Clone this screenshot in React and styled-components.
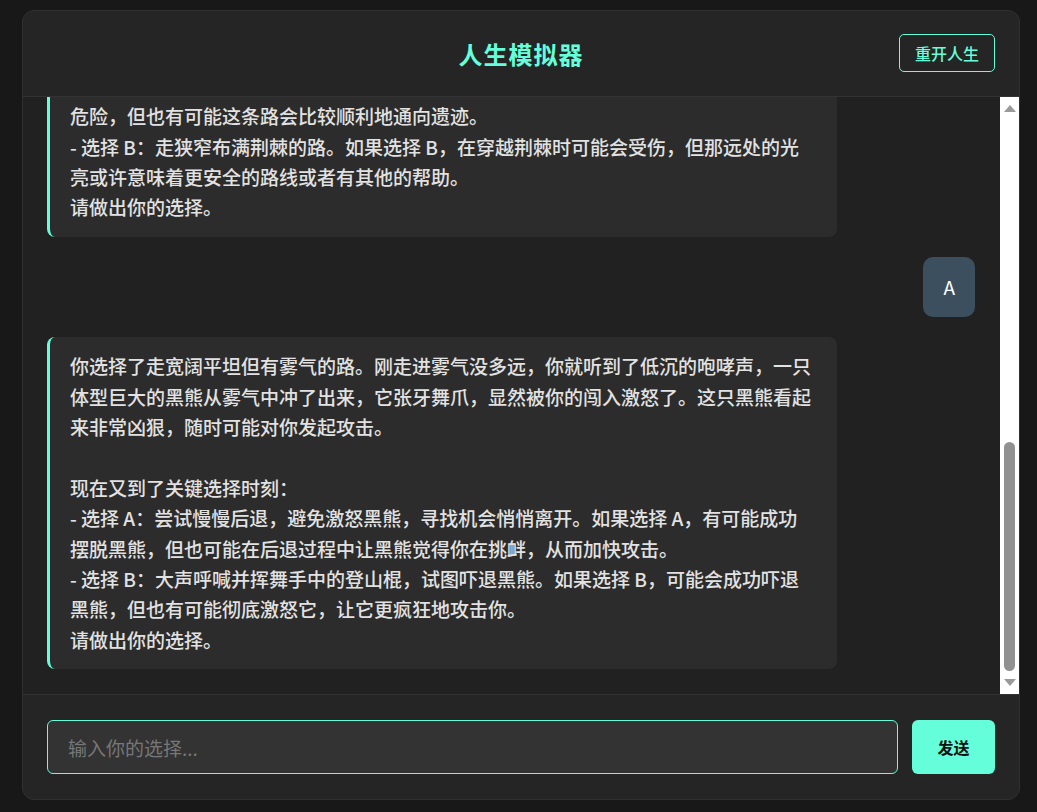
import React, { useLayoutEffect, useRef, useState } from 'react';
import styled, { createGlobalStyle } from 'styled-components';

const GlobalStyle = createGlobalStyle`
  html, body {
    margin: 0;
    padding: 0;
    background: #181818;
  }
  body {
    font-family: "Noto Sans CJK SC", "Noto Sans", sans-serif;
    color: #e0e0e0;
  }
  * {
    box-sizing: border-box;
  }
`;

const Page = styled.div`
  padding: 10px 17px 12px 22px;
`;

const Card = styled.div`
  width: 998px;
  height: 790px;
  display: flex;
  flex-direction: column;
  background: #252525;
  border-radius: 12px;
  border: 1px solid #303030;
  overflow: hidden;
`;

const Header = styled.header`
  display: grid;
  grid-template-columns: 1fr auto 1fr;
  align-items: center;
  padding: 23px 24px 24px;
  border-bottom: 1px solid #333;
`;

const Title = styled.h1`
  grid-column: 2;
  margin: 0;
  font-size: 24px;
  font-weight: 700;
  color: #64ffda;
  letter-spacing: 1px;
`;

const ResetButton = styled.button`
  grid-column: 3;
  justify-self: end;
  height: 38px;
  padding: 0 15px;
  background: transparent;
  border: 1px solid #64ffda;
  border-radius: 5px;
  color: #64ffda;
  font-family: inherit;
  font-size: 16px;
  font-weight: 500;
  cursor: pointer;
`;

const MessagesPane = styled.div`
  flex: 1;
  min-height: 0;
  display: flex;
  background: #212121;
`;

const MessageList = styled.div`
  flex: 1;
  min-width: 0;
  overflow-y: auto;
  scrollbar-width: none;
  padding: 25px 25px 25px 24px;
  display: flex;
  flex-direction: column;
  gap: 20px;

  &::-webkit-scrollbar {
    display: none;
  }
`;

/* drawn scrollbar, the headless browser hides the native one */
const ScrollBar = styled.div`
  width: 19px;
  flex-shrink: 0;
  display: flex;
  flex-direction: column;
  background: #fff;
`;

const ArrowButton = styled.div`
  height: 19px;
  flex-shrink: 0;
  display: flex;
  justify-content: center;
  align-items: ${({ $down }) => ($down ? 'flex-start' : 'flex-end')};
  padding: ${({ $down }) => ($down ? '4px 0 0' : '0 0 4px')};
`;

const Triangle = styled.span`
  width: 0;
  height: 0;
  border-left: 6.5px solid transparent;
  border-right: 6.5px solid transparent;
  ${({ $down }) =>
    $down ? 'border-top: 7px solid #9a9a9a;' : 'border-bottom: 7px solid #9a9a9a;'}
`;

const Track = styled.div`
  flex: 1;
  display: flex;
  flex-direction: column;
  justify-content: flex-end;
  align-items: center;
  padding: 4px 0;
`;

const Thumb = styled.div`
  width: 11px;
  border-radius: 6px;
  background: #919191;
`;

const Bubble = styled.div`
  flex-shrink: 0;
  max-width: ${({ $user }) => ($user ? '85%' : '790px')};
  align-self: ${({ $user }) => ($user ? 'flex-end' : 'flex-start')};
  padding: ${({ $user }) => ($user ? '15px 20px' : '14px 25px 14px 20px')};
  background: ${({ $user }) => ($user ? '#3c4f5f' : '#2c2c2c')};
  border-left: ${({ $user }) => ($user ? 'none' : '3px solid #64ffda')};
  border-radius: ${({ $user }) => ($user ? '10px' : '8px')};
  color: ${({ $user }) => ($user ? '#fff' : '#e2e2e2')};
  font-size: 19px;
  font-weight: ${({ $user }) => ($user ? 400 : 500)};
  line-height: 1.6;
  white-space: pre-wrap;
`;

const InputBar = styled.div`
  display: flex;
  gap: 14px;
  padding: 25px 24px 25px 24px;
  border-top: 1px solid #333;
`;

const ChoiceInput = styled.input`
  flex: 1;
  height: 54px;
  padding: 0 20px;
  background: #333;
  border: 1px solid #64ffda;
  border-radius: 6px;
  color: #e0e0e0;
  caret-color: #fff;
  font-family: inherit;
  font-size: 19px;
  outline: none;

  &::placeholder {
    color: #777;
  }
`;

const SendButton = styled.button`
  width: 83px;
  height: 54px;
  background: #64ffda;
  border: none;
  border-radius: 6px;
  color: #111;
  font-family: inherit;
  font-size: 16px;
  font-weight: 700;
  cursor: pointer;
`;

const initialMessages = [
  {
    role: 'bot',
    text: '欢迎来到人生模拟器！在这里，你将扮演一名热爱冒险的年轻探险家，经历一段充满未知的旅程。你的每一个选择都会影响故事的走向。准备好了吗？回复任意内容开始你的冒险。',
  },
  { role: 'user', text: '开始' },
  {
    role: 'bot',
    text: '你是一名热爱冒险的年轻探险家。一天，你在旧书店里翻到一本泛黄的笔记，上面记载着深山之中隐藏着一座古老的遗迹，据说遗迹里埋藏着失落文明的秘密。你收拾好背包，带上登山棍、绳索和干粮，独自踏上了旅程。\n\n经过两天的跋涉，你终于来到了山脚下。天色渐暗，山林里传来阵阵鸟鸣，远处的山峰被云雾笼罩。你发现面前有两条上山的路线。\n\n现在是你的第一个选择时刻：\n- 选择 A：沿着山脚的大路绕行。如果选择 A，路途会比较安全，但需要多花一天的时间，干粮可能会不够。\n- 选择 B：沿着溪流直接往上走。如果选择 B，能够节省不少时间，但溪边的石头湿滑，可能会有危险。\n请做出你的选择。',
  },
  { role: 'user', text: 'B' },
  {
    role: 'bot',
    text: '你选择了沿着溪流往上走。走了大约一个小时后，溪流消失在一片茂密的树林中，你的面前出现了两条小路。\n- 选择 A：走宽阔平坦但有雾气的路。如果选择 A，浓重的雾气中可能隐藏着难以察觉的危险，但也有可能这条路会比较顺利地通向遗迹。\n- 选择 B：走狭窄布满荆棘的路。如果选择 B，在穿越荆棘时可能会受伤，但那远处的光亮或许意味着更安全的路线或者有其他的帮助。\n请做出你的选择。',
  },
  { role: 'user', text: 'A' },
  {
    role: 'bot',
    text: '你选择了走宽阔平坦但有雾气的路。刚走进雾气没多远，你就听到了低沉的咆哮声，一只体型巨大的黑熊从雾气中冲了出来，它张牙舞爪，显然被你的闯入激怒了。这只黑熊看起来非常凶狠，随时可能对你发起攻击。\n\n现在又到了关键选择时刻：\n- 选择 A：尝试慢慢后退，避免激怒黑熊，寻找机会悄悄离开。如果选择 A，有可能成功摆脱黑熊，但也可能在后退过程中让黑熊觉得你在挑衅，从而加快攻击。\n- 选择 B：大声呼喊并挥舞手中的登山棍，试图吓退黑熊。如果选择 B，可能会成功吓退黑熊，但也有可能彻底激怒它，让它更疯狂地攻击你。\n请做出你的选择。',
  },
];

const App = () => {
  const [messages] = useState(initialMessages);
  const [choice, setChoice] = useState('');
  const [thumbHeight, setThumbHeight] = useState(0);
  const listRef = useRef(null);
  const trackRef = useRef(null);
  const inputRef = useRef(null);

  // keep the chat scrolled to the newest message and size the thumb
  useLayoutEffect(() => {
    const el = listRef.current;
    if (!el) return;
    el.scrollTop = el.scrollHeight;
    const trackH = trackRef.current ? trackRef.current.clientHeight - 8 : 0;
    setThumbHeight(Math.max(20, (trackH * el.clientHeight) / el.scrollHeight + 5));
  }, [messages]);

  useLayoutEffect(() => {
    if (inputRef.current) inputRef.current.focus();
  }, []);

  return (
    <Page>
      <GlobalStyle />
      <Card>
        <Header>
          <Title>人生模拟器</Title>
          <ResetButton type="button">重开人生</ResetButton>
        </Header>
        <MessagesPane>
          <MessageList ref={listRef}>
            {messages.map((m, i) => (
              <Bubble key={i} $user={m.role === 'user'}>
                {m.text}
              </Bubble>
            ))}
          </MessageList>
          <ScrollBar>
            <ArrowButton>
              <Triangle />
            </ArrowButton>
            <Track ref={trackRef}>
              <Thumb style={{ height: thumbHeight }} />
            </Track>
            <ArrowButton $down>
              <Triangle $down />
            </ArrowButton>
          </ScrollBar>
        </MessagesPane>
        <InputBar>
          <ChoiceInput
            ref={inputRef}
            value={choice}
            onChange={(e) => setChoice(e.target.value)}
            placeholder="输入你的选择..."
          />
          <SendButton type="button">发送</SendButton>
        </InputBar>
      </Card>
    </Page>
  );
};

export default App;
